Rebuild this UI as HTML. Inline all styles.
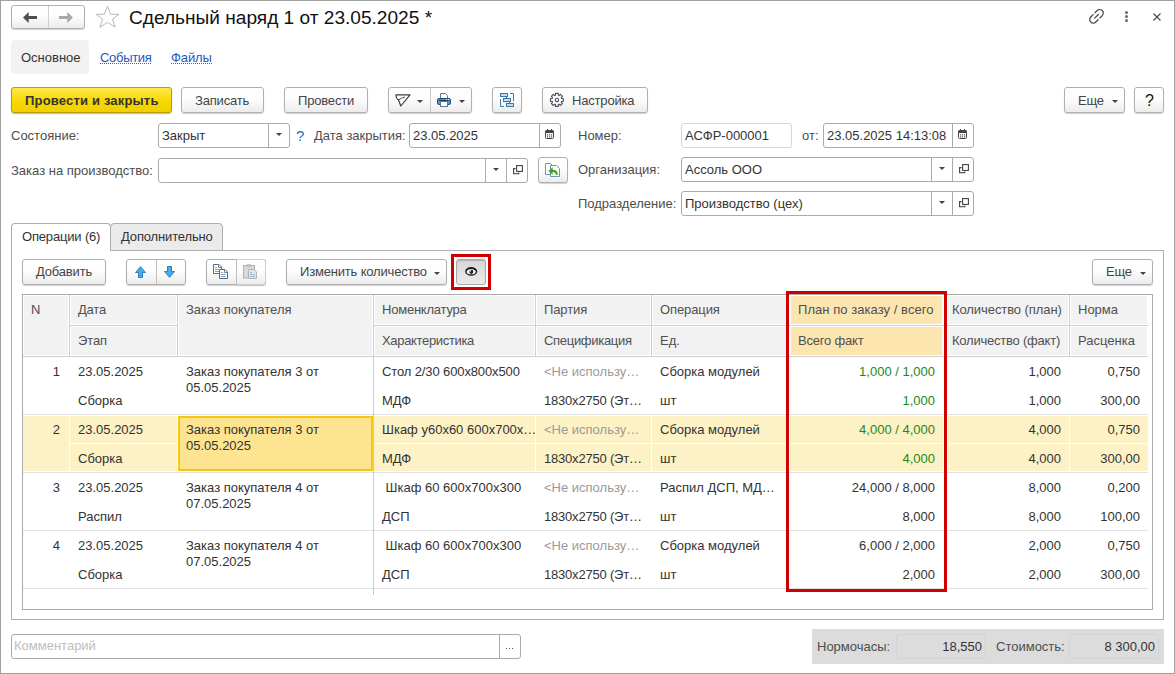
<!DOCTYPE html>
<html><head><meta charset="utf-8"><style>
*{box-sizing:border-box;margin:0;padding:0}
html,body{width:1175px;height:674px;overflow:hidden;background:#fff}
body{font-family:"Liberation Sans",sans-serif;font-size:13px;color:#4d4d4d;position:relative}
.a{position:absolute}
.t{position:absolute;white-space:nowrap;line-height:15px}
.btn{position:absolute;border:1px solid #b0b0b0;border-radius:3px;background:linear-gradient(#ffffff 0%,#fdfdfd 45%,#ececec 100%);box-shadow:0 1px 1px rgba(0,0,0,.18)}
.fld{position:absolute;border:1px solid #aaaaaa;border-radius:3px;background:#fff}
.lnk{background-image:linear-gradient(to right,#3a62bc 50%,transparent 50%);background-size:2px 1px;background-repeat:repeat-x;background-position:0 13px;padding-bottom:1px}
svg{position:absolute;overflow:visible}
</style></head><body>
<div class="a" style="left:0px;top:0px;width:1175px;height:674px;border:1px solid #a0a0a0"></div>
<div class="btn" style="left:11px;top:5px;width:74px;height:24px"></div>
<div class="a" style="left:48px;top:6px;width:1px;height:22px;background:#d0d0d0"></div>
<svg style="left:23px;top:12px" width="15" height="11" viewBox="0 0 15 11"><path d="M0 5.5 L5.7 0 V4 H14 V7 H5.7 V11 Z" fill="#505050"/></svg>
<svg style="left:59px;top:12px" width="15" height="11" viewBox="0 0 15 11"><path d="M14 5.5 L8.3 0 V4 H0 V7 H8.3 V11 Z" fill="#a8a8a8"/></svg>
<svg style="left:95px;top:5px" width="25" height="24" viewBox="0 0 25 24"><path d="M12.5 1.4 L15.7 9.3 L23.8 9.3 L17.4 14.4 L20.2 22.2 L12.5 17.4 L4.8 22.2 L7.6 14.4 L1.2 9.3 L9.3 9.3 Z" fill="none" stroke="#b3bac3" stroke-width="1" stroke-linejoin="miter"/></svg>
<div class="t" style="left:129px;top:8px;font-size:19.1px;line-height:20px;color:#111">Сдельный наряд 1 от 23.05.2025 *</div>
<svg style="left:1088px;top:8px" width="17" height="17" viewBox="0 0 17 17"><g fill="none" stroke="#4a4a4a" stroke-width="1.45" stroke-linecap="round" transform="translate(8.5 8.3) scale(0.87) translate(-8.5 -8.5)"><path d="M6.6 4.6 L9.3 1.9 A2.7 2.7 0 0 1 15.1 7.7 L12.4 10.4"/><path d="M4.6 6.6 L1.9 9.3 A2.7 2.7 0 0 0 7.7 15.1 L10.4 12.4"/><path d="M6.4 10.6 L10.6 6.4"/></g></svg>
<div class="a" style="left:1125px;top:11px;width:3px;height:3px;border-radius:50%;background:#6a6a6a"></div>
<div class="a" style="left:1125px;top:15px;width:3px;height:3px;border-radius:50%;background:#6a6a6a"></div>
<div class="a" style="left:1125px;top:19px;width:3px;height:3px;border-radius:50%;background:#6a6a6a"></div>
<svg style="left:1153px;top:13px" width="8" height="8" viewBox="0 0 8 8"><path d="M0.5 0.5 L7.5 7.5 M7.5 0.5 L0.5 7.5" stroke="#444" stroke-width="1.1"/></svg>
<div class="a" style="left:11px;top:40px;width:78px;height:34px;background:#f2f2f2;border-radius:4px"></div>
<div class="t" style="top:50px;left:21px;color:#333;">Основное</div>
<div class="t" style="top:50px;left:100px;color:#2456c4;letter-spacing:-0.3px"><span class="lnk">События</span></div>
<div class="t" style="top:50px;left:171px;color:#2456c4;letter-spacing:-0.1px"><span class="lnk">Файлы</span></div>
<div class="btn" style="left:11px;top:87px;width:161px;height:26px;background:linear-gradient(#fee94f,#f8d800 55%,#f0d000);border-color:#b99e00;box-shadow:0 1px 1px rgba(80,60,0,.35)"></div>
<div class="t" style="top:93px;left:25px;color:#333;font-weight:bold;letter-spacing:0.18px">Провести и закрыть</div>
<div class="btn" style="left:181px;top:87px;width:83px;height:26px;"></div>
<div class="t" style="top:93px;left:195px;color:#444;letter-spacing:-0.18px">Записать</div>
<div class="btn" style="left:284px;top:87px;width:84px;height:26px;"></div>
<div class="t" style="top:93px;left:298px;color:#444;letter-spacing:-0.18px">Провести</div>
<div class="btn" style="left:388px;top:87px;width:84px;height:26px;"></div>
<div class="a" style="left:430px;top:88px;width:1px;height:24px;background:#c8c8c8"></div>
<svg style="left:395px;top:94px" width="16" height="13" viewBox="0 0 16 13"><g fill="none" stroke="#3a3a3a" stroke-width="1.15" stroke-linejoin="round" stroke-linecap="round"><path d="M1 0.9 L15 0.9 L5.8 12 L3.5 6 Q0.8 4 1 0.9 Z"/><path d="M3.5 6 Q6.2 3.9 9.6 3.1" stroke-width="0.9"/></g></svg>
<svg style="left:417px;top:100px" width="6" height="4" viewBox="0 0 6 4"><path d="M0 0 H6 L3.0 3.0 Z" fill="#444"/></svg>
<svg style="left:437px;top:93px" width="14" height="14" viewBox="0 0 14 14"><path d="M3.5 5 V0.5 H8.5 L10.5 2.5 V5" fill="#fff" stroke="#5d7b98" stroke-width="1"/><rect x="0.5" y="5.5" width="13" height="6" rx="1.5" fill="#6993c2" stroke="#234f7d" stroke-width="1"/><rect x="1.5" y="6.5" width="11" height="1" fill="#3d6c9e"/><path d="M2 7.5 H12" stroke="#1f446c" stroke-width="1"/><rect x="9" y="6" width="1" height="1" fill="#fff"/><rect x="11" y="6" width="1" height="1" fill="#fff"/><rect x="3.5" y="8.5" width="7" height="5" fill="#fff" stroke="#5d7b98" stroke-width="1"/></svg>
<svg style="left:459px;top:100px" width="6" height="4" viewBox="0 0 6 4"><path d="M0 0 H6 L3.0 3.0 Z" fill="#444"/></svg>
<div class="btn" style="left:492px;top:87px;width:30px;height:26px;"></div>
<svg style="left:500px;top:93px" width="15" height="15" viewBox="0 0 15 15"><g fill="#c6dbee" stroke="#3b77ae" stroke-width="1"><rect x="0.5" y="0.5" width="7" height="3"/><rect x="3.5" y="5.5" width="7" height="3"/><rect x="6.5" y="10.5" width="7" height="3"/></g><g fill="none" stroke="#3b77ae" stroke-width="1"><path d="M6.5 4 V5 M9.5 9 V10"/><path d="M10 0.5 H13.5 V8"/><path d="M0.5 6 V13.5 H4"/></g></svg>
<div class="btn" style="left:542px;top:87px;width:106px;height:26px;"></div>
<div class="t" style="top:93px;left:572px;color:#444;letter-spacing:-0.18px">Настройка</div>
<svg style="left:548px;top:91px" width="18" height="18" viewBox="0 0 18 18"><g fill="none" stroke="#4d5461" stroke-width="1.15" stroke-linejoin="round"><path d="M7.43 4.23 L7.53 2.44 L10.27 2.44 L10.37 4.23 L11.16 4.55 L12.49 3.36 L14.44 5.31 L13.25 6.64 L13.57 7.43 L15.36 7.53 L15.36 10.27 L13.57 10.37 L13.25 11.16 L14.44 12.49 L12.49 14.44 L11.16 13.25 L10.37 13.57 L10.27 15.36 L7.53 15.36 L7.43 13.57 L6.64 13.25 L5.31 14.44 L3.36 12.49 L4.55 11.16 L4.23 10.37 L2.44 10.27 L2.44 7.53 L4.23 7.43 L4.55 6.64 L3.36 5.31 L5.31 3.36 L6.64 4.55 Z"/><circle cx="8.9" cy="8.9" r="1.7"/></g></svg>
<div class="btn" style="left:1064px;top:87px;width:61px;height:26px;"></div>
<div class="t" style="top:93px;left:1078px;color:#444;letter-spacing:-0.18px">Еще</div>
<svg style="left:1112px;top:100px" width="6" height="4" viewBox="0 0 6 4"><path d="M0 0 H6 L3.0 3.0 Z" fill="#444"/></svg>
<div class="btn" style="left:1134px;top:87px;width:30px;height:26px;"></div>
<div class="t" style="left:1145px;top:93px;font-size:16px;line-height:16px;color:#111">?</div>
<div class="t" style="top:128px;left:11px;">Состояние:</div>
<div class="fld" style="left:158px;top:123px;width:132px;height:25px;"></div>
<div class="a" style="left:268px;top:124px;width:1px;height:23px;background:#aaaaaa"></div>
<div class="t" style="top:128px;left:162px;color:#333;">Закрыт</div>
<svg style="left:276px;top:133px" width="6" height="4" viewBox="0 0 6 4"><path d="M0 0 H6 L3.0 3.0 Z" fill="#444"/></svg>
<div class="t" style="top:128px;left:296px;color:#1a70c2;font-size:15px">?</div>
<div class="t" style="top:128px;left:314px;">Дата закрытия:</div>
<div class="fld" style="left:409px;top:123px;width:152px;height:25px;"></div>
<div class="a" style="left:539px;top:124px;width:1px;height:23px;background:#aaaaaa"></div>
<div class="t" style="top:128px;left:413px;color:#333;">23.05.2025</div>
<svg style="left:545px;top:129px" width="9" height="10" viewBox="0 0 9 10"><rect x="0.5" y="1.5" width="8" height="8" rx="1" fill="#fff" stroke="#444" stroke-width="1"/><rect x="0.5" y="1.5" width="8" height="2.5" fill="#444"/><rect x="2" y="0" width="1" height="2" fill="#444"/><rect x="6" y="0" width="1" height="2" fill="#444"/><g fill="#555"><rect x="2" y="5.3" width="1.2" height="1.2"/><rect x="4" y="5.3" width="1.2" height="1.2"/><rect x="6" y="5.3" width="1.2" height="1.2"/><rect x="2" y="7.3" width="1.2" height="1.2"/><rect x="4" y="7.3" width="1.2" height="1.2"/><rect x="6" y="7.3" width="1.2" height="1.2"/></g></svg>
<div class="t" style="top:128px;left:578px;">Номер:</div>
<div class="fld" style="left:681px;top:123px;width:111px;height:25px;border-color:#d6d6d6"></div>
<div class="t" style="top:128px;left:685px;color:#333;">АСФР-000001</div>
<div class="t" style="top:128px;left:802px;">от:</div>
<div class="fld" style="left:823px;top:123px;width:151px;height:25px;"></div>
<div class="a" style="left:952px;top:124px;width:1px;height:23px;background:#aaaaaa"></div>
<div class="t" style="top:128px;left:827px;color:#333;">23.05.2025 14:13:08</div>
<svg style="left:958px;top:129px" width="9" height="10" viewBox="0 0 9 10"><rect x="0.5" y="1.5" width="8" height="8" rx="1" fill="#fff" stroke="#444" stroke-width="1"/><rect x="0.5" y="1.5" width="8" height="2.5" fill="#444"/><rect x="2" y="0" width="1" height="2" fill="#444"/><rect x="6" y="0" width="1" height="2" fill="#444"/><g fill="#555"><rect x="2" y="5.3" width="1.2" height="1.2"/><rect x="4" y="5.3" width="1.2" height="1.2"/><rect x="6" y="5.3" width="1.2" height="1.2"/><rect x="2" y="7.3" width="1.2" height="1.2"/><rect x="4" y="7.3" width="1.2" height="1.2"/><rect x="6" y="7.3" width="1.2" height="1.2"/></g></svg>
<div class="t" style="top:163px;left:11px;">Заказ на производство:</div>
<div class="fld" style="left:158px;top:158px;width:370px;height:25px;"></div>
<div class="a" style="left:485px;top:159px;width:1px;height:23px;background:#aaaaaa"></div>
<div class="a" style="left:506px;top:159px;width:1px;height:23px;background:#aaaaaa"></div>
<svg style="left:493px;top:168px" width="6" height="4" viewBox="0 0 6 4"><path d="M0 0 H6 L3.0 3.0 Z" fill="#444"/></svg>
<svg style="left:513px;top:165px" width="10" height="10" viewBox="0 0 10 10"><g fill="none" stroke="#3a3a3a" stroke-width="1.05"><rect x="3.6" y="0.6" width="5.8" height="5.8"/><path d="M2.5 3.6 H0.6 V8.8 H5.8 V7.6"/></g></svg>
<div class="btn" style="left:538px;top:157px;width:30px;height:26px;"></div>
<svg style="left:544px;top:162px" width="17" height="16" viewBox="0 0 17 16"><path d="M1.5 1.5 H6.5 L8.5 3.5 V12.5 H1.5 Z" fill="#fff" stroke="#7593ad" stroke-width="1"/><path d="M6.5 3.5 H12.5 L15.5 6.5 V14.5 H6.5 Z" fill="#fff" stroke="#7593ad" stroke-width="1"/><path d="M4.3 9 L8.6 5.2 V12.8 Z" fill="#3aa81e"/><path d="M8 9 Q12.6 8.4 12.8 12.8" fill="none" stroke="#3aa81e" stroke-width="2.2"/></svg>
<div class="t" style="top:162px;left:578px;">Организация:</div>
<div class="fld" style="left:681px;top:157px;width:293px;height:25px;"></div>
<div class="a" style="left:931px;top:158px;width:1px;height:23px;background:#aaaaaa"></div>
<div class="a" style="left:952px;top:158px;width:1px;height:23px;background:#aaaaaa"></div>
<div class="t" style="top:162px;left:685px;color:#333;">Ассоль ООО</div>
<svg style="left:939px;top:167px" width="6" height="4" viewBox="0 0 6 4"><path d="M0 0 H6 L3.0 3.0 Z" fill="#444"/></svg>
<svg style="left:959px;top:164px" width="10" height="10" viewBox="0 0 10 10"><g fill="none" stroke="#3a3a3a" stroke-width="1.05"><rect x="3.6" y="0.6" width="5.8" height="5.8"/><path d="M2.5 3.6 H0.6 V8.8 H5.8 V7.6"/></g></svg>
<div class="t" style="top:196px;left:578px;">Подразделение:</div>
<div class="fld" style="left:681px;top:191px;width:293px;height:25px;"></div>
<div class="a" style="left:931px;top:192px;width:1px;height:23px;background:#aaaaaa"></div>
<div class="a" style="left:952px;top:192px;width:1px;height:23px;background:#aaaaaa"></div>
<div class="t" style="top:196px;left:685px;color:#333;">Производство (цех)</div>
<svg style="left:939px;top:201px" width="6" height="4" viewBox="0 0 6 4"><path d="M0 0 H6 L3.0 3.0 Z" fill="#444"/></svg>
<svg style="left:959px;top:198px" width="10" height="10" viewBox="0 0 10 10"><g fill="none" stroke="#3a3a3a" stroke-width="1.05"><rect x="3.6" y="0.6" width="5.8" height="5.8"/><path d="M2.5 3.6 H0.6 V8.8 H5.8 V7.6"/></g></svg>
<div class="a" style="left:11px;top:250px;width:1153px;height:370px;border:1px solid #aeaeae"></div>
<div class="a" style="left:11px;top:223px;width:100px;height:28px;border:1px solid #aeaeae;border-bottom:none;border-radius:4px 4px 0 0;background:#fff"></div>
<div class="a" style="left:110px;top:223px;width:113px;height:28px;border:1px solid #aeaeae;border-radius:4px 4px 0 0;background:#ebebeb"></div>
<div class="t" style="top:229px;left:22px;color:#333;letter-spacing:-0.17px">Операции (6)</div>
<div class="t" style="top:229px;left:121px;color:#333;letter-spacing:-0.15px">Дополнительно</div>
<div class="btn" style="left:22px;top:259px;width:84px;height:26px;"></div>
<div class="t" style="top:264px;left:36px;color:#444;letter-spacing:-0.18px">Добавить</div>
<div class="btn" style="left:126px;top:259px;width:60px;height:26px;"></div>
<div class="a" style="left:156px;top:260px;width:1px;height:24px;background:#c0c0c0"></div>
<svg style="left:135px;top:266px" width="12" height="12" viewBox="0 0 12 12"><path d="M5.5 0.7 L10.5 6.5 H7.5 V11.5 H3.5 V6.5 H0.5 Z" fill="#4aaae9" stroke="#2c7dbd" stroke-width="1" stroke-linejoin="miter"/></svg>
<svg style="left:164px;top:266px" width="12" height="12" viewBox="0 0 12 12"><path d="M5.5 11.3 L10.5 5.5 H7.5 V0.5 H3.5 V5.5 H0.5 Z" fill="#4aaae9" stroke="#2c7dbd" stroke-width="1" stroke-linejoin="miter"/></svg>
<div class="btn" style="left:206px;top:259px;width:60px;height:26px;"></div>
<div class="a" style="left:236px;top:260px;width:1px;height:24px;background:#c0c0c0"></div>
<svg style="left:213px;top:264px" width="16" height="16" viewBox="0 0 16 16"><path d="M0.5 0.5 H6 L8.5 3 V9.5 H0.5 Z" fill="#fff" stroke="#536c87" stroke-width="1"/><path d="M5.5 0.5 V3.5 H8.5" fill="none" stroke="#6d88a6" stroke-width="1"/><path d="M6.5 5.5 H12 L14.5 8 V14.5 H6.5 Z" fill="#fff" stroke="#536c87" stroke-width="1"/><path d="M11.5 5.5 V8.5 H14.5" fill="none" stroke="#6d88a6" stroke-width="1"/><g stroke="#8aa0b6" stroke-width="1"><path d="M2 3.5 H4 M2 5.5 H6 M2 7.5 H6 M8 8.5 H10 M8 10.5 H12.5 M8 12.5 H12.5"/></g></svg>
<div class="a" style="left:237px;top:259px;width:29px;height:26px;border:1px solid #cfcfcf;border-left:none;border-radius:0 3px 3px 0;background:linear-gradient(#ffffff 0%,#fdfdfd 45%,#ececec 100%);box-shadow:0 1px 1px rgba(0,0,0,.08)"></div>
<svg style="left:243px;top:264px" width="15" height="16" viewBox="0 0 15 16"><rect x="0.5" y="1.5" width="11" height="12.5" fill="#dadada" stroke="#c2ad9c" stroke-width="1"/><rect x="4" y="0" width="4" height="2.5" fill="#c6c6c6"/><rect x="3" y="2" width="6" height="1" fill="#b9c0d0"/><path d="M5.5 5.5 H11 L13.5 8 V14.5 H5.5 Z" fill="#e4e4e4" stroke="#a8b5c3" stroke-width="1"/><g stroke="#a8b5c3" stroke-width="1"><path d="M7 8.5 H9 M7 10.5 H12 M7 12.5 H12"/></g></svg>
<div class="btn" style="left:286px;top:259px;width:161px;height:26px;"></div>
<div class="t" style="top:264px;left:300px;color:#444;letter-spacing:-0.18px">Изменить количество</div>
<svg style="left:434px;top:272px" width="6" height="4" viewBox="0 0 6 4"><path d="M0 0 H6 L3.0 3.0 Z" fill="#444"/></svg>
<div class="btn" style="left:456px;top:259px;width:30px;height:26px;background:linear-gradient(#d6d6d6,#ebebeb);border-color:#a8a8a8;box-shadow:inset 0 1px 1px rgba(0,0,0,.18)"></div>
<svg style="left:465px;top:267px" width="13" height="9" viewBox="0 0 13 9"><ellipse cx="6.2" cy="4.4" rx="5.3" ry="3.6" fill="#fff" stroke="#1e1e1e" stroke-width="1.5"/><path d="M1.2 3.6 Q6.2 -0.6 11.2 3.6" fill="none" stroke="#000" stroke-width="1"/><circle cx="6.3" cy="4.8" r="2.1" fill="#222"/><circle cx="5.3" cy="3.9" r="0.8" fill="#fff"/></svg>
<div class="btn" style="left:1092px;top:259px;width:61px;height:26px;"></div>
<div class="t" style="top:264px;left:1106px;color:#444;letter-spacing:-0.18px">Еще</div>
<svg style="left:1140px;top:272px" width="6" height="4" viewBox="0 0 6 4"><path d="M0 0 H6 L3.0 3.0 Z" fill="#444"/></svg>
<div class="a" style="left:22px;top:294px;width:1131px;height:316px;border:1px solid #aaaaaa"></div>
<div class="a" style="left:24px;top:296px;width:44px;height:59px;background:#f2f2f2"></div>
<div class="a" style="left:71px;top:296px;width:105px;height:28px;background:#f2f2f2"></div>
<div class="a" style="left:71px;top:327px;width:105px;height:28px;background:#f2f2f2"></div>
<div class="a" style="left:179px;top:296px;width:193px;height:59px;background:#f2f2f2"></div>
<div class="a" style="left:375px;top:296px;width:159px;height:28px;background:#f2f2f2"></div>
<div class="a" style="left:375px;top:327px;width:159px;height:28px;background:#f2f2f2"></div>
<div class="a" style="left:537px;top:296px;width:113px;height:28px;background:#f2f2f2"></div>
<div class="a" style="left:537px;top:327px;width:113px;height:28px;background:#f2f2f2"></div>
<div class="a" style="left:653px;top:296px;width:134px;height:28px;background:#f2f2f2"></div>
<div class="a" style="left:653px;top:327px;width:134px;height:28px;background:#f2f2f2"></div>
<div class="a" style="left:948px;top:296px;width:120px;height:28px;background:#f2f2f2"></div>
<div class="a" style="left:948px;top:327px;width:120px;height:28px;background:#f2f2f2"></div>
<div class="a" style="left:1071px;top:296px;width:76px;height:28px;background:#f2f2f2"></div>
<div class="a" style="left:1071px;top:327px;width:76px;height:28px;background:#f2f2f2"></div>
<div class="a" style="left:791px;top:296px;width:151px;height:28px;background:#fde5b0"></div>
<div class="a" style="left:791px;top:327px;width:151px;height:28px;background:#fde5b0"></div>
<div class="a" style="left:69px;top:295px;width:1px;height:61px;background:#cfcfcf"></div>
<div class="a" style="left:177px;top:295px;width:1px;height:61px;background:#cfcfcf"></div>
<div class="a" style="left:373px;top:295px;width:1px;height:61px;background:#cfcfcf"></div>
<div class="a" style="left:535px;top:295px;width:1px;height:61px;background:#cfcfcf"></div>
<div class="a" style="left:651px;top:295px;width:1px;height:61px;background:#cfcfcf"></div>
<div class="a" style="left:788px;top:295px;width:1px;height:61px;background:#cfcfcf"></div>
<div class="a" style="left:946px;top:295px;width:1px;height:61px;background:#cfcfcf"></div>
<div class="a" style="left:1069px;top:295px;width:1px;height:61px;background:#cfcfcf"></div>
<div class="a" style="left:69px;top:325px;width:108px;height:1px;background:#cfcfcf"></div>
<div class="a" style="left:373px;top:325px;width:775px;height:1px;background:#cfcfcf"></div>
<div class="a" style="left:23px;top:356px;width:1125px;height:1px;background:#cfcfcf"></div>
<div class="t" style="top:302px;left:31px;color:#505050;letter-spacing:0px">N</div>
<div class="t" style="top:302px;left:78px;color:#505050;letter-spacing:-0.2px">Дата</div>
<div class="t" style="top:302px;left:186px;color:#505050;letter-spacing:0px">Заказ покупателя</div>
<div class="t" style="top:302px;left:382px;color:#505050;letter-spacing:-0.22px">Номенклатура</div>
<div class="t" style="top:302px;left:544px;color:#505050;letter-spacing:-0.1px">Партия</div>
<div class="t" style="top:302px;left:660px;color:#505050;letter-spacing:-0.1px">Операция</div>
<div class="t" style="top:302px;left:798px;color:#505050;letter-spacing:0.05px">План по заказу / всего</div>
<div class="t" style="top:302px;left:952px;color:#505050;letter-spacing:-0.08px">Количество (план)</div>
<div class="t" style="top:302px;left:1078px;color:#505050;letter-spacing:0px">Норма</div>
<div class="t" style="top:333px;left:78px;color:#505050;letter-spacing:-0.1px">Этап</div>
<div class="t" style="top:333px;left:382px;color:#505050;letter-spacing:-0.33px">Характеристика</div>
<div class="t" style="top:333px;left:544px;color:#505050;letter-spacing:-0.3px">Спецификация</div>
<div class="t" style="top:333px;left:660px;color:#505050;letter-spacing:0px">Ед.</div>
<div class="t" style="top:333px;left:798px;color:#505050;letter-spacing:-0.2px">Всего факт</div>
<div class="t" style="top:333px;left:952px;color:#505050;letter-spacing:-0.22px">Количество (факт)</div>
<div class="t" style="top:333px;left:1078px;color:#505050;letter-spacing:0px">Расценка</div>
<div class="a" style="left:23px;top:414px;width:1125px;height:1px;background:#e2e2e2"></div>
<div class="t" style="top:364px;right:1115px;text-align:right;color:#333;">1</div>
<div class="t" style="top:364px;left:78px;color:#333;">23.05.2025</div>
<div class="t" style="top:393px;left:78px;color:#333;">Сборка</div>
<div class="t" style="top:364px;left:186px;color:#333;">Заказ покупателя 3 от</div>
<div class="t" style="top:380px;left:186px;color:#333;">05.05.2025</div>
<div class="t" style="top:364px;left:382px;color:#333;"><span style="letter-spacing:-0.12px">Стол 2/30 600x800x500</span></div>
<div class="t" style="top:393px;left:382px;color:#333;">МДФ</div>
<div class="t" style="top:364px;left:544px;color:#9a9a9a;">&lt;Не использу…</div>
<div class="t" style="top:393px;left:544px;color:#333;letter-spacing:-0.2px">1830x2750 (Эт…</div>
<div class="t" style="top:364px;left:660px;color:#333;">Сборка модулей</div>
<div class="t" style="top:393px;left:660px;color:#333;">шт</div>
<div class="t" style="top:364px;right:240px;text-align:right;color:#1b8a1b;">1,000 / 1,000</div>
<div class="t" style="top:393px;right:240px;text-align:right;color:#1b8a1b;">1,000</div>
<div class="t" style="top:364px;right:114px;text-align:right;color:#333;">1,000</div>
<div class="t" style="top:393px;right:114px;text-align:right;color:#333;">1,000</div>
<div class="t" style="top:364px;right:35px;text-align:right;color:#333;">0,750</div>
<div class="t" style="top:393px;right:35px;text-align:right;color:#333;">300,00</div>
<div class="a" style="left:23px;top:416px;width:1125px;height:55px;background:#fdf1c6"></div>
<div class="a" style="left:69px;top:415px;width:1px;height:57px;background:#fff"></div>
<div class="a" style="left:177px;top:415px;width:1px;height:57px;background:#fff"></div>
<div class="a" style="left:373px;top:415px;width:1px;height:57px;background:#fff"></div>
<div class="a" style="left:535px;top:415px;width:1px;height:57px;background:#fff"></div>
<div class="a" style="left:651px;top:415px;width:1px;height:57px;background:#fff"></div>
<div class="a" style="left:789px;top:415px;width:1px;height:57px;background:#fff"></div>
<div class="a" style="left:943px;top:415px;width:1px;height:57px;background:#fff"></div>
<div class="a" style="left:947px;top:415px;width:1px;height:57px;background:#fff"></div>
<div class="a" style="left:1069px;top:415px;width:1px;height:57px;background:#fff"></div>
<div class="a" style="left:69px;top:443px;width:108px;height:1px;background:#fff"></div>
<div class="a" style="left:373px;top:443px;width:775px;height:1px;background:#fff"></div>
<div class="a" style="left:178px;top:416px;width:195px;height:55px;background:#fde491;border:2px solid #f8c513"></div>
<div class="a" style="left:23px;top:472px;width:1125px;height:1px;background:#e2e2e2"></div>
<div class="t" style="top:422px;right:1115px;text-align:right;color:#333;">2</div>
<div class="t" style="top:422px;left:78px;color:#333;">23.05.2025</div>
<div class="t" style="top:451px;left:78px;color:#333;">Сборка</div>
<div class="t" style="top:422px;left:186px;color:#333;">Заказ покупателя 3 от</div>
<div class="t" style="top:438px;left:186px;color:#333;">05.05.2025</div>
<div class="t" style="top:422px;left:382px;color:#333;">Шкаф у60x60 600x700x…</div>
<div class="t" style="top:451px;left:382px;color:#333;">МДФ</div>
<div class="t" style="top:422px;left:544px;color:#9a9a9a;">&lt;Не использу…</div>
<div class="t" style="top:451px;left:544px;color:#333;letter-spacing:-0.2px">1830x2750 (Эт…</div>
<div class="t" style="top:422px;left:660px;color:#333;">Сборка модулей</div>
<div class="t" style="top:451px;left:660px;color:#333;">шт</div>
<div class="t" style="top:422px;right:240px;text-align:right;color:#1b8a1b;">4,000 / 4,000</div>
<div class="t" style="top:451px;right:240px;text-align:right;color:#1b8a1b;">4,000</div>
<div class="t" style="top:422px;right:114px;text-align:right;color:#333;">4,000</div>
<div class="t" style="top:451px;right:114px;text-align:right;color:#333;">4,000</div>
<div class="t" style="top:422px;right:35px;text-align:right;color:#333;">0,750</div>
<div class="t" style="top:451px;right:35px;text-align:right;color:#333;">300,00</div>
<div class="a" style="left:23px;top:530px;width:1125px;height:1px;background:#e2e2e2"></div>
<div class="t" style="top:480px;right:1115px;text-align:right;color:#333;">3</div>
<div class="t" style="top:480px;left:78px;color:#333;">23.05.2025</div>
<div class="t" style="top:509px;left:78px;color:#333;">Распил</div>
<div class="t" style="top:480px;left:186px;color:#333;">Заказ покупателя 4 от</div>
<div class="t" style="top:496px;left:186px;color:#333;">07.05.2025</div>
<div class="t" style="top:480px;left:382px;color:#333;">&nbsp;Шкаф 60 600x700x300</div>
<div class="t" style="top:509px;left:382px;color:#333;">ДСП</div>
<div class="t" style="top:480px;left:544px;color:#9a9a9a;">&lt;Не использу…</div>
<div class="t" style="top:509px;left:544px;color:#333;letter-spacing:-0.2px">1830x2750 (Эт…</div>
<div class="t" style="top:480px;left:660px;color:#333;">Распил ДСП, МД…</div>
<div class="t" style="top:509px;left:660px;color:#333;">шт</div>
<div class="t" style="top:480px;right:240px;text-align:right;color:#333;">24,000 / 8,000</div>
<div class="t" style="top:509px;right:240px;text-align:right;color:#333;">8,000</div>
<div class="t" style="top:480px;right:114px;text-align:right;color:#333;">8,000</div>
<div class="t" style="top:509px;right:114px;text-align:right;color:#333;">8,000</div>
<div class="t" style="top:480px;right:35px;text-align:right;color:#333;">0,200</div>
<div class="t" style="top:509px;right:35px;text-align:right;color:#333;">100,00</div>
<div class="a" style="left:23px;top:588px;width:1125px;height:1px;background:#e2e2e2"></div>
<div class="t" style="top:538px;right:1115px;text-align:right;color:#333;">4</div>
<div class="t" style="top:538px;left:78px;color:#333;">23.05.2025</div>
<div class="t" style="top:567px;left:78px;color:#333;">Сборка</div>
<div class="t" style="top:538px;left:186px;color:#333;">Заказ покупателя 4 от</div>
<div class="t" style="top:554px;left:186px;color:#333;">07.05.2025</div>
<div class="t" style="top:538px;left:382px;color:#333;">&nbsp;Шкаф 60 600x700x300</div>
<div class="t" style="top:567px;left:382px;color:#333;">ДСП</div>
<div class="t" style="top:538px;left:544px;color:#9a9a9a;">&lt;Не использу…</div>
<div class="t" style="top:567px;left:544px;color:#333;letter-spacing:-0.2px">1830x2750 (Эт…</div>
<div class="t" style="top:538px;left:660px;color:#333;">Сборка модулей</div>
<div class="t" style="top:567px;left:660px;color:#333;">шт</div>
<div class="t" style="top:538px;right:240px;text-align:right;color:#333;">6,000 / 2,000</div>
<div class="t" style="top:567px;right:240px;text-align:right;color:#333;">2,000</div>
<div class="t" style="top:538px;right:114px;text-align:right;color:#333;">2,000</div>
<div class="t" style="top:567px;right:114px;text-align:right;color:#333;">2,000</div>
<div class="t" style="top:538px;right:35px;text-align:right;color:#333;">0,750</div>
<div class="t" style="top:567px;right:35px;text-align:right;color:#333;">300,00</div>
<div class="a" style="left:373px;top:357px;width:1px;height:238px;background:#cdcdcd"></div>
<div class="a" style="left:786px;top:291px;width:161px;height:301px;border:3px solid #d00000"></div>
<div class="a" style="left:451px;top:254px;width:40px;height:36px;border:3px solid #d00000"></div>
<div class="fld" style="left:11px;top:634px;width:510px;height:25px;"></div>
<div class="a" style="left:499px;top:635px;width:1px;height:23px;background:#aaaaaa"></div>
<svg style="left:506px;top:648px" width="9" height="2" viewBox="0 0 9 2"><g fill="#555"><rect x="0" y="0" width="1" height="1"/><rect x="3" y="0" width="1" height="1"/><rect x="6" y="0" width="1" height="1"/></g></svg>
<div class="t" style="top:638px;left:14px;color:#bdbdbd;">Комментарий</div>
<div class="a" style="left:812px;top:629px;width:352px;height:35px;background:#dcdcdc"></div>
<div class="a" style="left:896px;top:634px;width:90px;height:25px;border:1px solid #d3d3d3;border-radius:3px"></div>
<div class="a" style="left:1069px;top:634px;width:90px;height:25px;border:1px solid #d3d3d3;border-radius:3px"></div>
<div class="t" style="top:639px;left:817px;">Нормочасы:</div>
<div class="t" style="top:639px;right:193px;text-align:right;color:#333;">18,550</div>
<div class="t" style="top:639px;left:996px;">Стоимость:</div>
<div class="t" style="top:639px;right:20px;text-align:right;color:#333;">8 300,00</div>
</body></html>
